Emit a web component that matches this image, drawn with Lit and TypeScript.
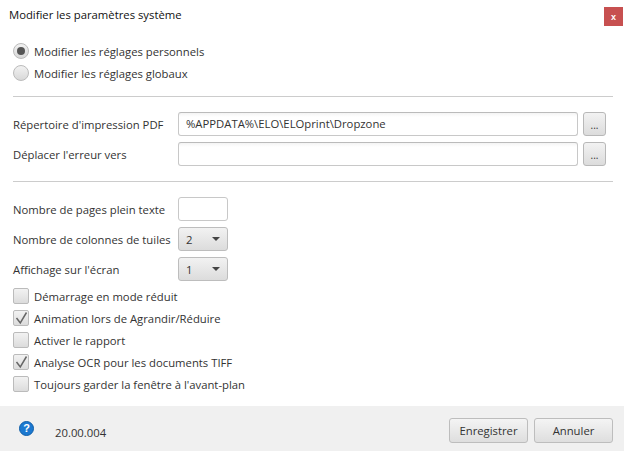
import { LitElement, html, css } from "lit";
import { customElement } from "lit/decorators.js";

const check = html`<svg viewBox="0 0 16 16" width="16" height="16"><path d="M3.5 8 L7.3 13 L13.5 2.5" fill="none" stroke="#666" stroke-width="1.5"/></svg>`;

@customElement("app-root")
export class AppRoot extends LitElement {
  static styles = css`
    :host { display: block; width: 624px; height: 451px; background: #fff; font-family: "Open Sans", "Noto Sans", sans-serif; font-size: 11.3px; color: #333; overflow: hidden; }
    * { box-sizing: border-box; }
    .root { display: flex; flex-direction: column; height: 451px; }
    .titlebar { display: flex; justify-content: space-between; align-items: flex-start; height: 43px; padding: 7px 1px 0 9px; }
    .title { color: #111; line-height: 16px; }
    .close { width: 19px; height: 19px; background: #c75050; color: #fff; font: bold 9px "Liberation Sans", sans-serif; display: flex; align-items: center; justify-content: center; }
    .body { flex: 1; padding: 0 11px 0 13px; display: flex; flex-direction: column; }
    .radios { display: flex; flex-direction: column; gap: 6px; padding-bottom: 15px; }
    .row { display: flex; align-items: center; gap: 5px; height: 16px; }
    .radio { width: 16px; height: 16px; border-radius: 50%; border: 1px solid #bbb; background: linear-gradient(#f2f2f2, #d8d8d8); display: flex; align-items: center; justify-content: center; }
    .radio.on::after { content: ""; width: 8px; height: 8px; border-radius: 50%; background: #555; }
    hr { border: 0; border-top: 1px solid #ccc; margin: 0; width: 600px; }
    .paths { display: flex; flex-direction: column; gap: 6px; padding: 15px 0; }
    .line { display: grid; grid-template-columns: 165px 400px 23px; column-gap: 0; align-items: center; height: 24px; }
    .field { height: 24px; border: 1px solid #c8c8c8; border-top-color: #bbb; border-radius: 3px; background: linear-gradient(#f4f4f4, #fff 4px); padding: 0 7px; line-height: 22px; color: #333; }
    .dots { margin-left: 5px; width: 23px; height: 24px; border: 1px solid #b8b8b8; border-radius: 3px; background: linear-gradient(#f2f2f2, #dcdcdc); text-align: center; line-height: 25px; font-size: 10px; }
    .opts { display: flex; flex-direction: column; gap: 6px; padding-top: 15px; }
    .small { width: 50px; height: 24px; border: 1px solid #c8c8c8; border-radius: 3px; }
    .select { width: 50px; height: 24px; border: 1px solid #bdbdbd; border-radius: 3px; background: linear-gradient(#f2f2f2, #dcdcdc); display: flex; justify-content: space-between; align-items: center; padding: 0 7px; }
    .caret { width: 0; height: 0; border-left: 4px solid transparent; border-right: 4px solid transparent; border-top: 4px solid #444; }
    .opt { display: grid; grid-template-columns: 165px 50px; align-items: center; height: 24px; }
    .checks { display: flex; flex-direction: column; gap: 6px; padding-top: 7px; }
    .box { width: 16px; height: 16px; border: 1px solid #bbb; border-radius: 2px; background: linear-gradient(#f2f2f2, #dcdcdc); }
    .box svg { display: block; margin: -1px; }
    .footer { height: 45px; background: #f0f0f0; display: flex; align-items: center; padding: 0 11px 0 19px; }
    .help { width: 15px; height: 15px; border-radius: 50%; background: #1b78d0; border: 1px solid #0f5ea8; color: #fff; font: bold 11px/13px "Liberation Sans", sans-serif; text-align: center; margin-top: 0; }
    .version { margin-left: 21px; margin-top: 8px; flex: 1; }
    .btn { width: 79px; height: 25px; border: 1px solid #bdbdbd; border-radius: 3px; background: linear-gradient(#f4f4f4, #dedede); display: flex; align-items: center; justify-content: center; margin-left: 6px; margin-top: 3px; }
  `;
  render() {
    const checks: [string, boolean][] = [
      ["Démarrage en mode réduit", false],
      ["Animation lors de Agrandir/Réduire", true],
      ["Activer le rapport", false],
      ["Analyse OCR pour les documents TIFF", true],
      ["Toujours garder la fenêtre à l'avant-plan", false],
    ];
    return html`<div class="root">
      <div class="titlebar"><span class="title">Modifier les paramètres système</span><span class="close">x</span></div>
      <div class="body">
        <div class="radios">
          <div class="row"><span class="radio on"></span>Modifier les réglages personnels</div>
          <div class="row"><span class="radio"></span>Modifier les réglages globaux</div>
        </div>
        <hr />
        <div class="paths">
          <div class="line"><span>Répertoire d'impression PDF</span><div class="field">%APPDATA%\\ELO\\ELOprint\\Dropzone</div><div class="dots">...</div></div>
          <div class="line"><span>Déplacer l'erreur vers</span><div class="field"></div><div class="dots">...</div></div>
        </div>
        <hr />
        <div class="opts">
          <div class="opt"><span>Nombre de pages plein texte</span><div class="small"></div></div>
          <div class="opt"><span>Nombre de colonnes de tuiles</span><div class="select">2<span class="caret"></span></div></div>
          <div class="opt"><span>Affichage sur l'écran</span><div class="select">1<span class="caret"></span></div></div>
        </div>
        <div class="checks">
          ${checks.map(([t, on]) => html`<div class="row"><span class="box">${on ? check : ""}</span>${t}</div>`)}
        </div>
      </div>
      <div class="footer"><span class="help">?</span><span class="version">20.00.004</span><span class="btn">Enregistrer</span><span class="btn">Annuler</span></div>
    </div>`;
  }
}
